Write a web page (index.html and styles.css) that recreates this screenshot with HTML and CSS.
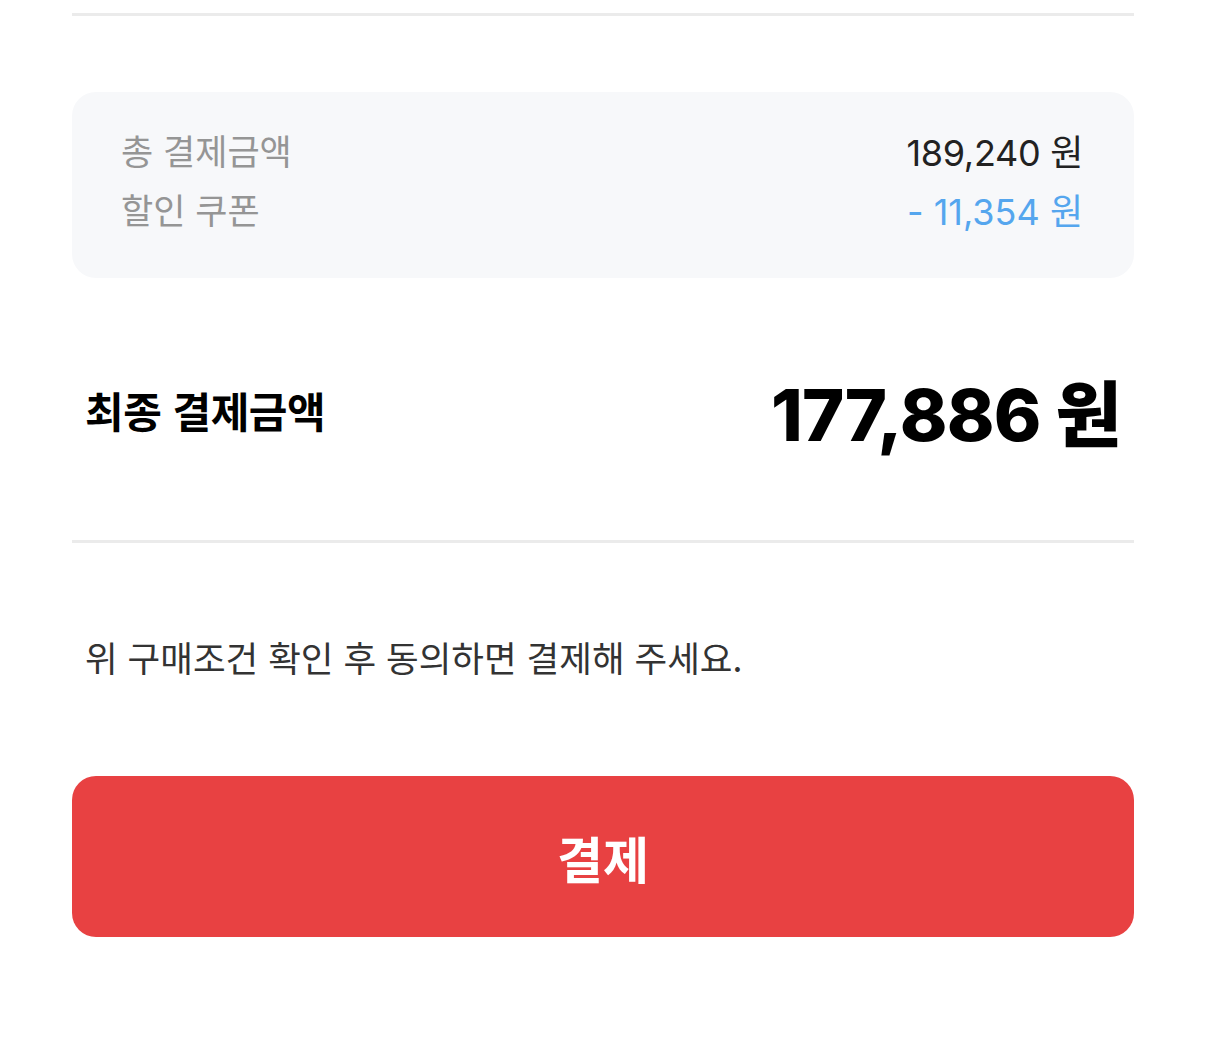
FILE: index.html
```html
<!DOCTYPE html>
<html lang="ko">
<head>
  <meta charset="UTF-8">
  <meta name="viewport" content="width=device-width, initial-scale=1.0">
  <title>결제</title>
  <link rel="stylesheet" href="styles.css">
</head>
<body>
  <div class="page">
    <hr class="divider top">

    <!-- 금액 요약 -->
    <div class="summary">
      <div class="row">
        <span class="label">총 결제금액</span>
        <span class="amount">189,240 원</span>
      </div>
      <div class="row">
        <span class="label">할인 쿠폰</span>
        <span class="amount discount">- 11,354 원</span>
      </div>
    </div>

    <!-- 최종 금액 -->
    <div class="total">
      <span class="total-label">최종 결제금액</span>
      <span class="total-amount">177,886 원</span>
    </div>

    <hr class="divider">

    <p class="notice">위 구매조건 확인 후 동의하면 결제해 주세요.</p>

    <button class="pay">결제</button>
  </div>
</body>
</html>
```

FILE: styles.css
```css
body {
  margin: 0;
  background: #ffffff;
  font-family: 'Inter', 'Noto Sans CJK KR', sans-serif;
  color: #111;
}

.page {
  width: 1062px;
  margin: 0 auto;
  padding-top: 13px;
}

.divider {
  border: none;
  height: 3px;
  background: #ebebeb;
  margin: 0;
}

.summary {
  margin-top: 76px;
  background: #f7f8fa;
  border-radius: 24px;
  padding: 28px 51px 40px 49px;
  display: flex;
  flex-direction: column;
}

.row {
  display: flex;
  justify-content: space-between;
  align-items: center;
  height: 59px;
}

.label {
  font-family: 'Noto Sans CJK KR', sans-serif;
  font-size: 35px;
  color: #959595;
}

.amount {
  font-size: 36px;
  color: #222;
  letter-spacing: -0.3px;
}

.discount {
  color: #55a6ee;
  letter-spacing: 0;
}

.total {
  display: flex;
  justify-content: space-between;
  align-items: center;
  padding: 0 13px;
  height: 262px;
}

.total-label {
  font-family: 'Noto Sans CJK KR', sans-serif;
  font-size: 42px;
  font-weight: 700;
  color: #000;
  letter-spacing: -0.5px;
}

.total-amount {
  font-size: 72px;
  font-weight: 800;
  color: #000;
  letter-spacing: -0.8px;
}

.notice {
  margin: 89px 0 0 13px;
  font-family: 'Noto Sans CJK KR', sans-serif;
  font-size: 35.5px;
  color: #333;
  line-height: 50px;
}

.pay {
  display: block;
  width: 100%;
  height: 161px;
  margin-top: 94px;
  border: none;
  border-radius: 24px;
  background: #e84142;
  color: #fff;
  font-family: 'Noto Sans CJK KR', sans-serif;
  font-size: 50px;
  font-weight: 700;
  cursor: pointer;
}
```
